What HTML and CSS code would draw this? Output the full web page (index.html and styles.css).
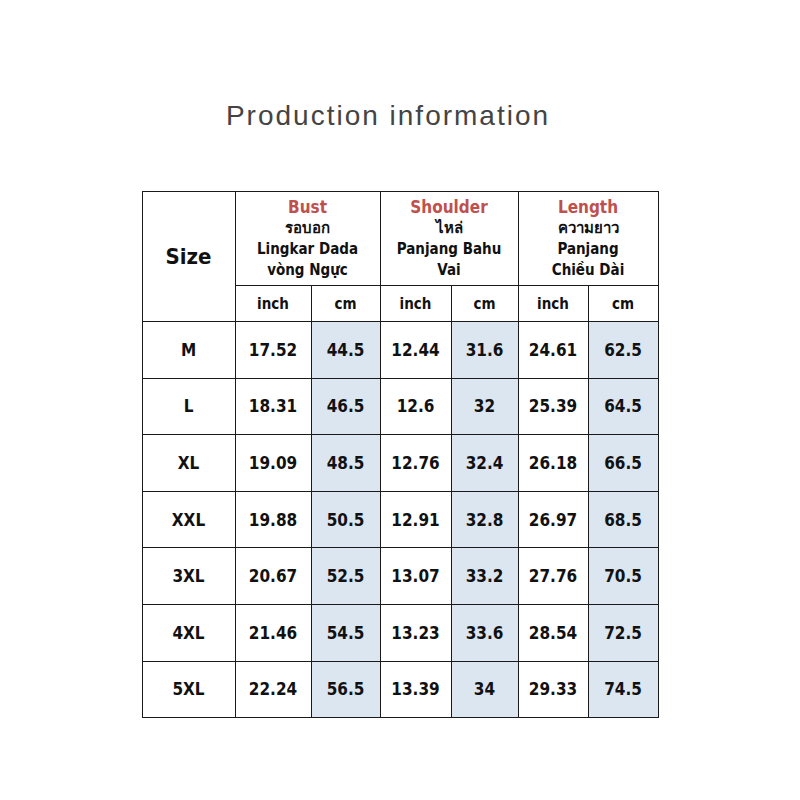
FILE: index.html
```html
<!DOCTYPE html>
<html>
<head>
<meta charset="utf-8">
<link rel="stylesheet" href="styles.css">
</head>
<body>
<div class="page">
  <h1 class="title">Production information</h1>
  <table class="sizes">
    <colgroup>
      <col class="c-size"><col class="c-in1"><col class="c-cm1"><col class="c-in2"><col class="c-cm2"><col class="c-in3"><col class="c-cm3">
    </colgroup>
    <thead>
      <tr class="head">
        <th rowspan="2" class="size-head">Size</th>
        <th colspan="2"><span class="en">Bust</span><span class="sub">รอบอก</span><span class="sub">Lingkar Dada</span><span class="sub">vòng Ngực</span></th>
        <th colspan="2"><span class="en">Shoulder</span><span class="sub">ไหล่</span><span class="sub">Panjang Bahu</span><span class="sub">Vai</span></th>
        <th colspan="2"><span class="en">Length</span><span class="sub">ความยาว</span><span class="sub">Panjang</span><span class="sub">Chiều Dài</span></th>
      </tr>
      <tr class="units">
        <th>inch</th><th>cm</th><th>inch</th><th>cm</th><th>inch</th><th>cm</th>
      </tr>
    </thead>
    <tbody>
      <tr><td>M</td><td>17.52</td><td class="cm">44.5</td><td>12.44</td><td class="cm">31.6</td><td>24.61</td><td class="cm">62.5</td></tr>
      <tr><td>L</td><td>18.31</td><td class="cm">46.5</td><td>12.6</td><td class="cm">32</td><td>25.39</td><td class="cm">64.5</td></tr>
      <tr><td>XL</td><td>19.09</td><td class="cm">48.5</td><td>12.76</td><td class="cm">32.4</td><td>26.18</td><td class="cm">66.5</td></tr>
      <tr><td>XXL</td><td>19.88</td><td class="cm">50.5</td><td>12.91</td><td class="cm">32.8</td><td>26.97</td><td class="cm">68.5</td></tr>
      <tr><td>3XL</td><td>20.67</td><td class="cm">52.5</td><td>13.07</td><td class="cm">33.2</td><td>27.76</td><td class="cm">70.5</td></tr>
      <tr><td>4XL</td><td>21.46</td><td class="cm">54.5</td><td>13.23</td><td class="cm">33.6</td><td>28.54</td><td class="cm">72.5</td></tr>
      <tr><td>5XL</td><td>22.24</td><td class="cm">56.5</td><td>13.39</td><td class="cm">34</td><td>29.33</td><td class="cm">74.5</td></tr>
    </tbody>
  </table>
</div>
</body>
</html>
```
FILE: styles.css
```css
html, body {
  margin: 0;
  padding: 0;
  background: #ffffff;
}
.page {
  width: 800px;
  height: 800px;
  display: flex;
  flex-direction: column;
  align-items: center;
}
.title {
  margin: 97px 0 0 0;
  height: 38px;
  line-height: 38px;
  font-family: "Liberation Sans", Arial, sans-serif;
  font-weight: normal;
  font-size: 28px;
  letter-spacing: 2px;
  color: #444444;
  transform: translateX(-12px);
}
.sizes {
  margin-top: 56px;
  border-collapse: collapse;
  table-layout: fixed;
  width: 516px;
  font-family: "DejaVu Sans Condensed", "DejaVu Sans", sans-serif;
  font-weight: bold;
  color: #111111;
}
.sizes th, .sizes td {
  border: 1px solid #1a1a1a;
  padding: 0;
  text-align: center;
  vertical-align: middle;
}
.c-size { width: 93px; }
.c-in1 { width: 76px; }
.c-cm1 { width: 69px; }
.c-in2 { width: 71px; }
.c-cm2 { width: 67px; }
.c-in3 { width: 70px; }
.c-cm3 { width: 70px; }
.head th {
  height: 93px;
  font-size: 15px;
  font-weight: bold;
  line-height: 21px;
}
.head .size-head {
  font-size: 22px;
}
.en {
  display: block;
  color: #c0504d;
  font-size: 17px;
  line-height: 22px;
}
.sub {
  display: block;
}
.units th {
  height: 35px;
  font-size: 15px;
}
.sizes td {
  height: 55.6px;
  font-size: 17px;
}
.sizes td.cm {
  background: #dce6f1;
}
```
